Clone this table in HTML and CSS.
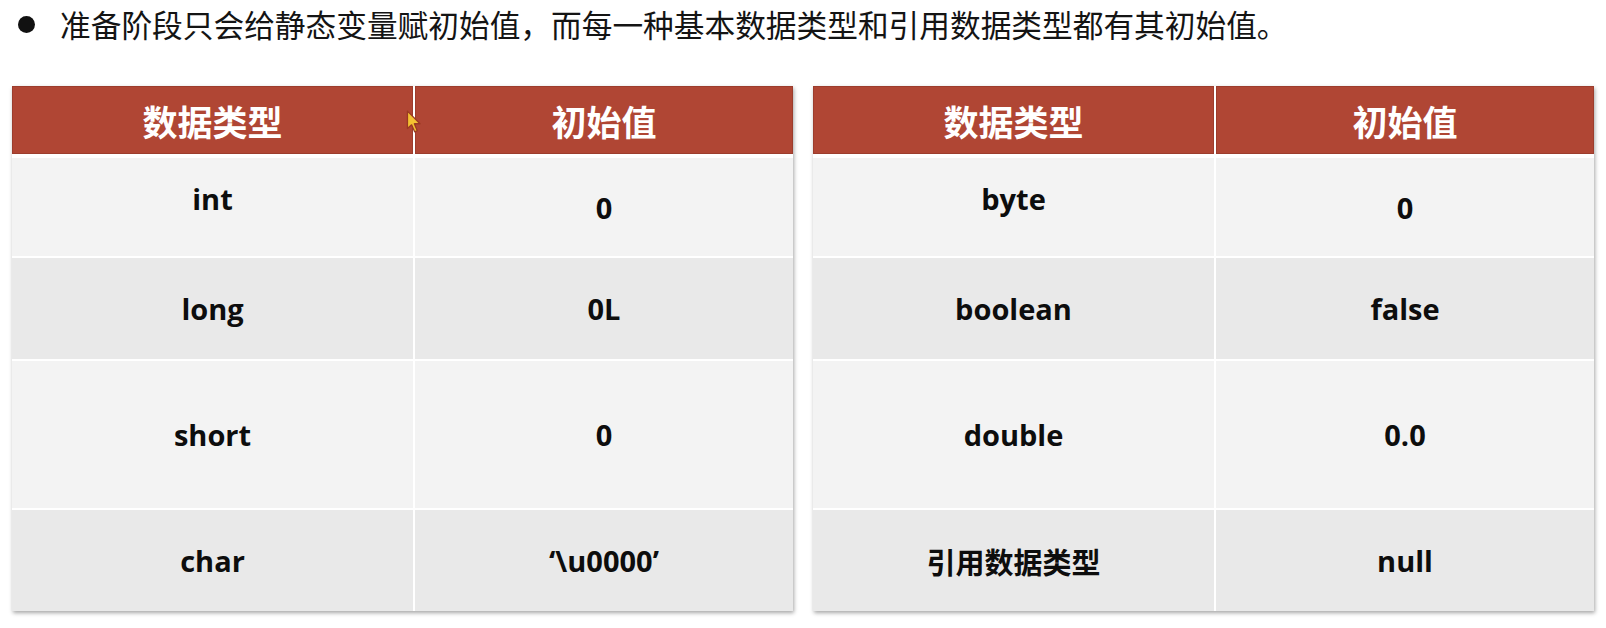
FILE: index.html
```html
<!DOCTYPE html>
<html lang="zh-CN">
<head>
<meta charset="utf-8">
<title>初始值</title>
<link rel="stylesheet" href="styles.css">
</head>
<body>
<div class="page">
  <p class="bullet-line"><span class="dot"></span><span class="bullet-text">准备阶段只会给静态变量赋初始值，而每一种基本数据类型和引用数据类型都有其初始值。</span></p>
  <div class="tables">
    <div class="table">
      <div class="th">数据类型</div>
      <div class="th">初始值</div>
      <div class="td light raised">int</div>
      <div class="td light">0</div>
      <div class="td dark">long</div>
      <div class="td dark">0L</div>
      <div class="td light">short</div>
      <div class="td light">0</div>
      <div class="td dark">char</div>
      <div class="td dark">‘\u0000’</div>
      <svg class="cursor" width="16" height="24" viewBox="0 0 14 22"><path d="M1 1 L1 17 L4.8 13.6 L7.6 20 L10 19 L7.3 12.6 L12.5 12.6 Z" fill="#f4c232" stroke="#9a3a22" stroke-width="1.2" stroke-linejoin="round"/></svg>
    </div>
    <div class="table">
      <div class="th">数据类型</div>
      <div class="th">初始值</div>
      <div class="td light raised">byte</div>
      <div class="td light">0</div>
      <div class="td dark">boolean</div>
      <div class="td dark">false</div>
      <div class="td light">double</div>
      <div class="td light">0.0</div>
      <div class="td dark">引用数据类型</div>
      <div class="td dark">null</div>
    </div>
  </div>
</div>
</body>
</html>
```

FILE: styles.css
```css
html, body {
  margin: 0;
  padding: 0;
  background: #ffffff;
}

.page {
  width: 1606px;
  height: 628px;
  overflow: hidden;
  font-family: "Open Sans", "Noto Sans CJK SC", sans-serif;
}

.bullet-line {
  margin: 0;
  padding: 4px 0 0 18px;
  height: 40px;
  display: flex;
  align-items: center;
}

.dot {
  width: 17px;
  height: 17px;
  border-radius: 50%;
  background: #111111;
  flex: none;
  margin-right: 25px;
}

.bullet-text {
  font-family: "Noto Sans CJK SC", sans-serif;
  font-size: 30.7px;
  line-height: 40px;
  color: #141414;
}

.tables {
  display: flex;
  gap: 20px;
  padding-left: 12px;
  margin-top: 42px;
}

.table {
  position: relative;
  width: 781px;
  display: grid;
  grid-template-columns: 401px 1fr;
  grid-template-rows: 70px 98px 101px 147px 101px;
  column-gap: 2px;
  row-gap: 2px;
  background: #ffffff;
  box-shadow: 1px 2px 4px rgba(0, 0, 0, 0.35);
}

.th {
  background: #b04634;
  color: #ffffff;
  font-family: "Noto Sans CJK SC", sans-serif;
  font-weight: 700;
  font-size: 35px;
  display: flex;
  align-items: center;
  justify-content: center;
  margin-bottom: 2px;
  box-shadow: inset 0 0 0 1px #9c3d2d;
}

.td {
  display: flex;
  align-items: center;
  justify-content: center;
  font-weight: 700;
  font-size: 29px;
  color: #0d0d0d;
}

.td.raised {
  padding-bottom: 18px;
}

.light {
  background: #f3f3f3;
}

.dark {
  background: #e9e9e9;
}

.cursor {
  position: absolute;
  left: 394px;
  top: 24px;
}
```
